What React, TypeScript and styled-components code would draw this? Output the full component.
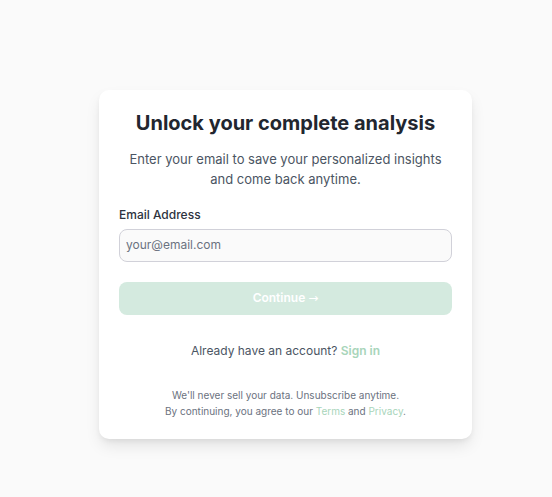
import React from "react";
import styled, { createGlobalStyle } from "styled-components";

const GlobalStyle = createGlobalStyle`
  *, *::before, *::after { box-sizing: border-box; }
  body { margin: 0; background: #fafafa; font-family: Inter, sans-serif; }
`;

const Page = styled.main`
  min-height: 100vh;
  display: flex;
  justify-content: center;
  align-items: flex-start;
  padding: 90px 80px 58px 99px;
`;

const Card = styled.section`
  width: 100%;
  max-width: 448px;
  padding: 20px;
  background: #ffffff;
  border-radius: 10px;
  box-shadow: 0 8px 16px -2px rgba(0, 0, 0, 0.1), 0 3px 6px -2px rgba(0, 0, 0, 0.08);
`;

const Title = styled.h1`
  margin: 0 0 13px;
  font-size: 20px;
  line-height: 26px;
  font-weight: 700;
  text-align: center;
  color: #22262f;
`;

const Lead = styled.p`
  margin: 0 0 16px;
  font-size: 13px;
  line-height: 20px;
  text-align: center;
  color: #4b5563;
`;

const Form = styled.form`
  display: flex;
  flex-direction: column;
`;

const Label = styled.label`
  margin-bottom: 4px;
  font-size: 12px;
  line-height: 20px;
  font-weight: 500;
  color: #2d3340;
`;

const EmailInput = styled.input`
  width: 100%;
  height: 33px;
  padding: 0 6px 2px;
  border: 1px solid #d1d1d9;
  border-radius: 8px;
  background: #fafafa;
  font: 400 12px/18px Inter, sans-serif;
  color: #1f2937;
  &::placeholder { color: #6b7280; opacity: 1; }
`;

const SubmitButton = styled.button`
  height: 33px;
  margin-top: 20px;
  padding: 0 0 2px;
  border: 0;
  border-radius: 8px;
  background: #d4eadf;
  color: #ffffff;
  font: 600 12px/18px Inter, sans-serif;
`;

const Arrow = styled.span`
  font-family: "DejaVu Sans", sans-serif;
  font-weight: 400;
`;

const Account = styled.p`
  margin: 26px 0;
  font-size: 12px;
  line-height: 20px;
  text-align: center;
  color: #4b5563;
`;

const Link = styled.a<{ $strong?: boolean }>`
  color: #a8d5ba;
  font-weight: ${(p) => (p.$strong ? 600 : 400)};
  text-decoration: none;
`;

const Legal = styled.p`
  margin: 0;
  font-size: 10px;
  line-height: 16px;
  text-align: center;
  color: #6b7280;
`;

export default function App() {
  return (
    <>
      <GlobalStyle />
      <Page>
        <Card>
          <Title>Unlock your complete analysis</Title>
          <Lead>Enter your email to save your personalized insights and come back anytime.</Lead>
          <Form onSubmit={(e) => e.preventDefault()}>
            <Label htmlFor="email">Email Address</Label>
            <EmailInput id="email" type="email" placeholder="your@email.com" />
            <SubmitButton type="submit">
              Continue <Arrow>→</Arrow>
            </SubmitButton>
          </Form>
          <Account>
            Already have an account? <Link $strong href="#signin">Sign in</Link>
          </Account>
          <Legal>We'll never sell your data. Unsubscribe anytime.</Legal>
          <Legal>
            By continuing, you agree to our <Link href="#terms">Terms</Link> and{" "}
            <Link href="#privacy">Privacy</Link>.
          </Legal>
        </Card>
      </Page>
    </>
  );
}
